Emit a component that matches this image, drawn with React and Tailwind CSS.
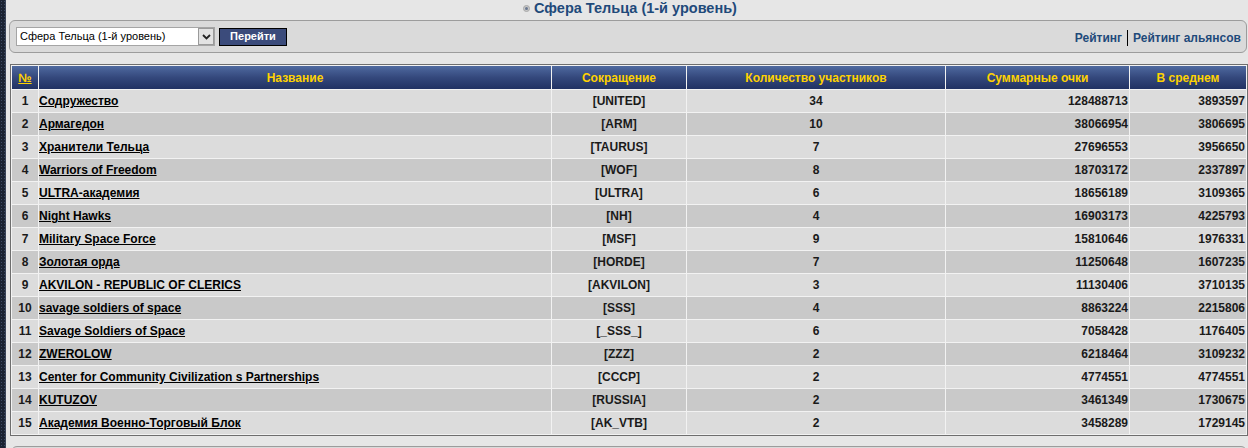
import React from 'react';

const rows = [
  [1, 'Содружество', '[UNITED]', 34, 128488713, 3893597],
  [2, 'Армагедон', '[ARM]', 10, 38066954, 3806695],
  [3, 'Хранители Тельца', '[TAURUS]', 7, 27696553, 3956650],
  [4, 'Warriors of Freedom', '[WOF]', 8, 18703172, 2337897],
  [5, 'ULTRA-академия', '[ULTRA]', 6, 18656189, 3109365],
  [6, 'Night Hawks', '[NH]', 4, 16903173, 4225793],
  [7, 'Military Space Force', '[MSF]', 9, 15810646, 1976331],
  [8, 'Золотая орда', '[HORDE]', 7, 11250648, 1607235],
  [9, 'AKVILON - REPUBLIC OF CLERICS', '[AKVILON]', 3, 11130406, 3710135],
  [10, 'savage soldiers of space', '[SSS]', 4, 8863224, 2215806],
  [11, 'Savage Soldiers of Space', '[_SSS_]', 6, 7058428, 1176405],
  [12, 'ZWEROLOW', '[ZZZ]', 2, 6218464, 3109232],
  [13, 'Center for Community Civilization s Partnerships', '[CCCP]', 2, 4774551, 4774551],
  [14, 'KUTUZOV', '[RUSSIA]', 2, 3461349, 1730675],
  [15, 'Академия Военно-Торговый Блок', '[AK_VTB]', 2, 3458289, 1729145],
];

const headers = ['№', 'Название', 'Сокращение', 'Количество участников', 'Суммарные очки', 'В среднем'];

export default function App() {
  return (
    <div className="flex h-[448px] w-[1248px] overflow-hidden bg-[#e6e6e6] font-['Liberation_Sans',Arial,sans-serif]">
      {/* dark side strip */}
      <div className="w-[6px] shrink-0 border-r border-[#3a4458] bg-[#1b2333] bg-[radial-gradient(#3d4a63_1px,transparent_1px)] bg-[length:3px_3px]" />

      <div className="flex min-w-0 flex-1 flex-col pl-[3px] pr-[1px]">
        {/* title */}
        <div className="flex h-[16px] shrink-0 items-center justify-center gap-[4px] pl-[4px]">
          <span className="flex h-[7px] w-[7px] items-center justify-center rounded-full bg-[#c8c8c8] border border-[#a8a8a8]">
            <span className="h-[3px] w-[3px] rounded-full bg-[#6a7890]" />
          </span>
          <span className="text-[14.5px] font-bold leading-none text-[#1f4a7a]">Сфера Тельца (1-й уровень)</span>
        </div>

        {/* toolbar */}
        <div className="mt-[4px] flex h-[33px] shrink-0 items-center justify-between rounded-[6px] border border-[#9c9c9c] bg-[#dadada] pl-[6px] pr-[5px]">
          <div className="flex items-center gap-[4px]">
            <div className="flex h-[19px] w-[199px] items-center justify-between border border-[#a5a5a5] bg-white">
              <span className="pl-[3px] text-[11px] leading-none text-black">Сфера Тельца (1-й уровень)</span>
              <span className="flex h-[17px] w-[16px] items-center justify-center border border-[#9a9a9a] bg-[#e2e2e2]">
                <svg width="9" height="6" viewBox="0 0 9 6">
                  <path d="M1 1 L4.5 4.5 L8 1" fill="none" stroke="#222" strokeWidth="1.8" />
                </svg>
              </span>
            </div>
            <button className="h-[18px] w-[68px] border border-black bg-[#3b4b7b] text-[11px] font-bold leading-none text-white">Перейти</button>
          </div>
          <div className="flex items-center pt-[2px] text-[12px] font-bold text-[#1f4a7a]">
            <span className="pr-[5px]">Рейтинг</span>
            <span className="h-[16px] w-px bg-black" />
            <span className="pl-[5px]">Рейтинг альянсов</span>
          </div>
        </div>

        {/* table */}
        <table className="mt-[11px] ml-[1px] w-[1237px] shrink-0 table-fixed border-separate border-spacing-px border border-[#6e6e6e] bg-[#f2f2f2] text-[12px] font-bold">
          <colgroup>
            <col className="w-[26px]" />
            <col className="w-[512px]" />
            <col className="w-[134px]" />
            <col className="w-[258px]" />
            <col className="w-[183px]" />
            <col className="w-[116px]" />
          </colgroup>
          <thead>
            <tr>
              {headers.map((h, i) => (
                <th
                  key={i}
                  className={`h-[23px] bg-gradient-to-b from-[#506aa0] via-[#34487c] to-[#213263] p-0 text-center font-bold text-[#ffd200] ${i === 0 ? 'underline' : ''}`}
                >
                  {h}
                </th>
              ))}
            </tr>
          </thead>
          <tbody>
            {rows.map((r, idx) => {
              const bg = idx % 2 === 0 ? 'bg-[#dcdcdc]' : 'bg-[#c9c9c9]';
              return (
                <tr key={r[0]} className="text-[#1a1a1a]">
                  <td className={`${bg} h-[22px] p-0 text-center`}>{r[0]}</td>
                  <td className={`${bg} p-0 text-left`}>
                    <span className="text-black underline">{r[1]}</span>
                  </td>
                  <td className={`${bg} p-0 text-center`}>{r[2]}</td>
                  <td className={`${bg} p-0 text-center`}>{r[3]}</td>
                  <td className={`${bg} p-0 pr-[1px] text-right`}>{r[4]}</td>
                  <td className={`${bg} p-0 pr-[1px] text-right`}>{r[5]}</td>
                </tr>
              );
            })}
          </tbody>
        </table>

        {/* next box */}
        <div className="mt-[10px] ml-[2px] h-[20px] shrink-0 rounded-t-[6px] border border-[#9c9c9c] bg-[#dadada]" />
      </div>
    </div>
  );
}
